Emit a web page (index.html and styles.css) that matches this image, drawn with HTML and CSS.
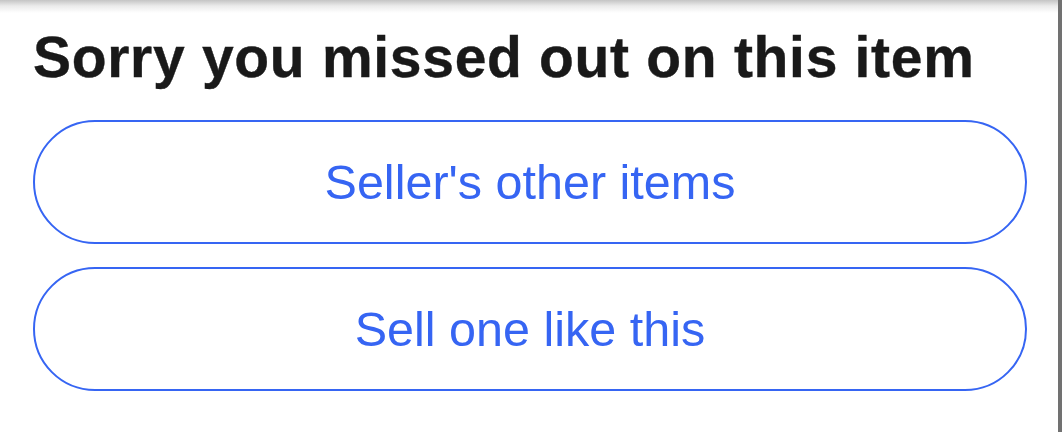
FILE: index.html
```html
<!DOCTYPE html>
<html lang="en">
<head>
    <meta charset="UTF-8">
    <meta name="viewport" content="width=device-width, initial-scale=1.0">
    <title>Item ended</title>
    <link rel="stylesheet" href="styles.css">
</head>
<body>
    <div class="page">
        <main class="sold-panel">
            <h2 class="sold-title">Sorry you missed out on this item</h2>
            <div class="sold-actions">
                <a class="pill-button" href="#">Seller's other items</a>
                <a class="pill-button" href="#">Sell one like this</a>
            </div>
        </main>
        <div class="edge-bar"></div>
    </div>
</body>
</html>
```

FILE: styles.css
```css
body { margin: 0; font-family: 'Liberation Sans', Arial, sans-serif; background: #ffffff; color: #191919; }

.page { display: flex; height: 432px; overflow: hidden; }

/* Contenido principal */
.sold-panel { flex: 1; padding: 0 31px 0 33px; background: linear-gradient(to bottom, #c4c4c4 0, #ebebeb 6px, #ffffff 13px); }
.sold-title { margin: 0; padding-top: 24px; font-size: 57px; font-weight: 700; line-height: 66px; letter-spacing: 0.7px; color: #191919; -webkit-text-stroke: 0.4px #191919; }
.sold-actions { display: flex; flex-direction: column; gap: 23px; margin-top: 30px; }
.pill-button { display: flex; justify-content: center; align-items: center; height: 124px; box-sizing: border-box; border: 2.5px solid #3665f3; border-radius: 62px; color: #3665f3; font-size: 48.5px; text-decoration: none; background: #ffffff; }

/* Barra lateral gris */
.edge-bar { width: 4px; background: #717171; }
```
